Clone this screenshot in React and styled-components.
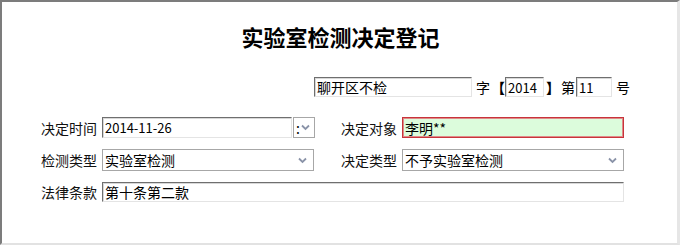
import React from 'react';
import styled, { createGlobalStyle } from 'styled-components';

const GlobalStyle = createGlobalStyle`
    html, body {
        margin: 0;
        padding: 0;
        background: #ffffff;
    }
    body {
        font-family: "Noto Sans CJK SC", "DejaVu Sans", sans-serif;
        color: #000;
    }
`;

const Frame = styled.div`
    box-sizing: border-box;
    width: 680px;
    height: 245px;
    border-style: solid;
    border-width: 2px 3px 2px 2px;
    border-color: #7c7c7c #e6e6e6 #e2e2e2 #7c7c7c;
    padding-top: 22px;
    display: flex;
    flex-direction: column;
`;

const Title = styled.h3`
    margin: 0;
    height: 24px;
    line-height: 24px;
    text-align: center;
    font-size: 22px;
    font-weight: bold;
    padding-left: 2px;
`;

const Row = styled.div`
    display: flex;
    align-items: center;
    height: ${p => p.h || 21}px;
    margin-top: ${p => p.top}px;
    padding-left: ${p => p.left || 39}px;
`;

const Group = styled.div`
    display: flex;
    align-items: center;
    width: ${p => p.w}px;
    height: 100%;
`;

const Label = styled.span`
    width: 56px;
    flex: none;
    font-size: 14px;
    line-height: 1;
    margin-right: 5px;
    white-space: nowrap;
    color: #111;
`;

const Glyph = styled.span`
    font-size: 14px;
    line-height: 1;
    margin: 0 ${p => p.mr || 0}px 0 ${p => p.ml || 0}px;
    font-weight: ${p => (p.bold ? 'bold' : 'normal')};
`;

const Field = styled.div`
    box-sizing: border-box;
    width: ${p => p.w}px;
    height: 100%;
    display: flex;
    align-items: center;
    padding-left: 2px;
    font-size: ${p => p.fs || 14}px;
    line-height: 1;
    white-space: nowrap;
    overflow: hidden;
    background: ${p => (p.required ? '#dcfcdc' : '#ffffff')};
    border-style: solid;
    border-width: 1px;
    border-color: ${p =>
        p.required ? '#c8343a' : '#6f6f6f #e4e4e4 #e4e4e4 #6f6f6f'};
    box-shadow: ${p => (p.required ? 'inset 0 0 0 1px #e08a8a' : 'inset 1px 1px 0 #d8d8d8')};
`;

const Select = styled.div`
    box-sizing: border-box;
    width: ${p => p.w}px;
    height: 100%;
    display: flex;
    align-items: center;
    justify-content: space-between;
    padding: ${p => (p.compact ? '0 4px 0 2px' : '0 6px 0 2px')};
    margin-left: ${p => (p.compact ? 1 : 0)}px;
    font-size: 14px;
    line-height: 1;
    white-space: nowrap;
    background: #fff;
    border: 1px solid #a7a7a7;
`;

const Chevron = () => (
    <svg width="9" height="7" viewBox="0 0 9 7">
        <path d="M1 1.5 L4.5 5 L8 1.5" fill="none" stroke="#8a93a8" strokeWidth="1.8" />
    </svg>
);

const App = () => {
    return (
        <>
            <GlobalStyle />
            <Frame>
                <Title>实验室检测决定登记</Title>

                <Row h={20} top={29} left={312}>
                    <Field w={158}>聊开区不检</Field>
                    <Glyph ml={4} mr={1}>字</Glyph>
                    <Glyph bold>【</Glyph>
                    <Field w={39} fs={13}>2014</Field>
                    <Glyph ml={2} mr={1} bold>】</Glyph>
                    <Glyph mr={1}>第</Glyph>
                    <Field w={36} fs={13}>11</Field>
                    <Glyph ml={4}>号</Glyph>
                </Row>

                <Row top={20}>
                    <Group w={300}>
                        <Label>决定时间</Label>
                        <Field w={190} fs={13}>2014-11-26</Field>
                        <Select w={22} compact>
                            <span>:</span>
                            <Chevron />
                        </Select>
                    </Group>
                    <Label>决定对象</Label>
                    <Field w={222} required>李明**</Field>
                </Row>

                <Row h={22} top={11}>
                    <Group w={300}>
                        <Label>检测类型</Label>
                        <Select w={212}>
                            <span>实验室检测</span>
                            <Chevron />
                        </Select>
                    </Group>
                    <Label>决定类型</Label>
                    <Select w={222}>
                        <span>不予实验室检测</span>
                        <Chevron />
                    </Select>
                </Row>

                <Row h={20} top={11}>
                    <Label>法律条款</Label>
                    <Field w={522}>第十条第二款</Field>
                </Row>
            </Frame>
        </>
    );
};

export default App;
